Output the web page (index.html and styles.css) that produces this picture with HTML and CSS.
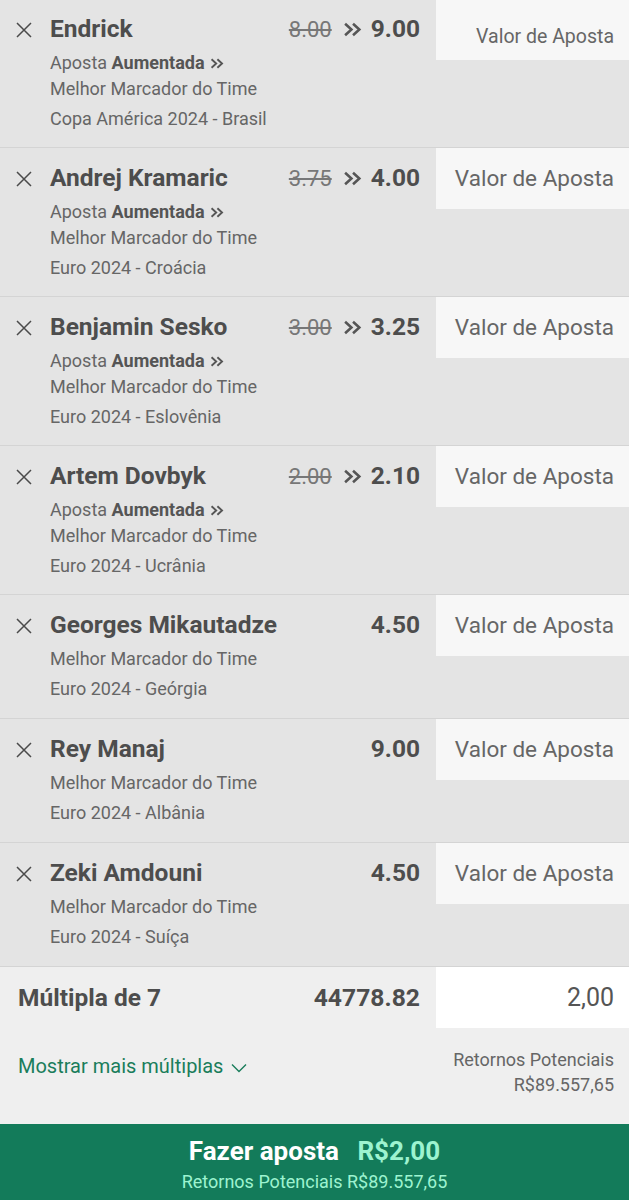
FILE: index.html
```html
<!DOCTYPE html>
<html lang="pt-BR">
<head>
    <meta charset="UTF-8">
    <meta name="viewport" content="width=device-width, initial-scale=1.0">
    <title>Boletim de Apostas</title>
    <link rel="stylesheet" href="styles.css">
</head>
<body>
    <div class="slip">
        <div class="bet">
            <div class="remove"><svg viewBox="0 0 16 16"><path d="M1 1L15 15M15 1L1 15"/></svg></div>
            <div class="info">
                <div class="name">Endrick</div>
                <div class="boost">Aposta <b>Aumentada</b> <svg class="chev" viewBox="0 0 18 14"><path d="M2 1.5L8 7L2 12.5M9.5 1.5L15.5 7L9.5 12.5"/></svg></div>
                <div class="line">Melhor Marcador do Time</div>
                <div class="line">Copa América 2024 - Brasil</div>
            </div>
            <div class="odds"><s>8.00</s><svg class="chev" viewBox="0 0 18 14"><path d="M2 1.5L8 7L2 12.5M9.5 1.5L15.5 7L9.5 12.5"/></svg><b>9.00</b></div>
            <div class="stake stake-small">Valor de Aposta</div>
        </div>

        <div class="bet">
            <div class="remove"><svg viewBox="0 0 16 16"><path d="M1 1L15 15M15 1L1 15"/></svg></div>
            <div class="info">
                <div class="name">Andrej Kramaric</div>
                <div class="boost">Aposta <b>Aumentada</b> <svg class="chev" viewBox="0 0 18 14"><path d="M2 1.5L8 7L2 12.5M9.5 1.5L15.5 7L9.5 12.5"/></svg></div>
                <div class="line">Melhor Marcador do Time</div>
                <div class="line">Euro 2024 - Croácia</div>
            </div>
            <div class="odds"><s>3.75</s><svg class="chev" viewBox="0 0 18 14"><path d="M2 1.5L8 7L2 12.5M9.5 1.5L15.5 7L9.5 12.5"/></svg><b>4.00</b></div>
            <div class="stake">Valor de Aposta</div>
        </div>

        <div class="bet">
            <div class="remove"><svg viewBox="0 0 16 16"><path d="M1 1L15 15M15 1L1 15"/></svg></div>
            <div class="info">
                <div class="name">Benjamin Sesko</div>
                <div class="boost">Aposta <b>Aumentada</b> <svg class="chev" viewBox="0 0 18 14"><path d="M2 1.5L8 7L2 12.5M9.5 1.5L15.5 7L9.5 12.5"/></svg></div>
                <div class="line">Melhor Marcador do Time</div>
                <div class="line">Euro 2024 - Eslovênia</div>
            </div>
            <div class="odds"><s>3.00</s><svg class="chev" viewBox="0 0 18 14"><path d="M2 1.5L8 7L2 12.5M9.5 1.5L15.5 7L9.5 12.5"/></svg><b>3.25</b></div>
            <div class="stake">Valor de Aposta</div>
        </div>

        <div class="bet">
            <div class="remove"><svg viewBox="0 0 16 16"><path d="M1 1L15 15M15 1L1 15"/></svg></div>
            <div class="info">
                <div class="name">Artem Dovbyk</div>
                <div class="boost">Aposta <b>Aumentada</b> <svg class="chev" viewBox="0 0 18 14"><path d="M2 1.5L8 7L2 12.5M9.5 1.5L15.5 7L9.5 12.5"/></svg></div>
                <div class="line">Melhor Marcador do Time</div>
                <div class="line">Euro 2024 - Ucrânia</div>
            </div>
            <div class="odds"><s>2.00</s><svg class="chev" viewBox="0 0 18 14"><path d="M2 1.5L8 7L2 12.5M9.5 1.5L15.5 7L9.5 12.5"/></svg><b>2.10</b></div>
            <div class="stake">Valor de Aposta</div>
        </div>

        <div class="bet">
            <div class="remove"><svg viewBox="0 0 16 16"><path d="M1 1L15 15M15 1L1 15"/></svg></div>
            <div class="info">
                <div class="name">Georges Mikautadze</div>
                <div class="line">Melhor Marcador do Time</div>
                <div class="line">Euro 2024 - Geórgia</div>
            </div>
            <div class="odds"><b>4.50</b></div>
            <div class="stake">Valor de Aposta</div>
        </div>

        <div class="bet">
            <div class="remove"><svg viewBox="0 0 16 16"><path d="M1 1L15 15M15 1L1 15"/></svg></div>
            <div class="info">
                <div class="name">Rey Manaj</div>
                <div class="line">Melhor Marcador do Time</div>
                <div class="line">Euro 2024 - Albânia</div>
            </div>
            <div class="odds"><b>9.00</b></div>
            <div class="stake">Valor de Aposta</div>
        </div>

        <div class="bet">
            <div class="remove"><svg viewBox="0 0 16 16"><path d="M1 1L15 15M15 1L1 15"/></svg></div>
            <div class="info">
                <div class="name">Zeki Amdouni</div>
                <div class="line">Melhor Marcador do Time</div>
                <div class="line">Euro 2024 - Suíça</div>
            </div>
            <div class="odds"><b>4.50</b></div>
            <div class="stake">Valor de Aposta</div>
        </div>
    </div>

    <div class="multiple">
        <div class="multiple-top">
            <div class="multiple-title">Múltipla de 7</div>
            <div class="multiple-odds">44778.82</div>
            <div class="multiple-stake">2,00</div>
        </div>
        <div class="multiple-bottom">
            <a class="more" href="#">Mostrar mais múltiplas <svg viewBox="0 0 16 10"><path d="M1 1.5L8 8.5L15 1.5"/></svg></a>
            <div class="returns">
                <div>Retornos Potenciais</div>
                <div>R$89.557,65</div>
            </div>
        </div>
    </div>

    <button class="place" type="button">
        <span class="place-main">Fazer aposta <span class="place-amount">R$2,00</span></span>
        <span class="place-sub">Retornos Potenciais R$89.557,65</span>
    </button>
</body>
</html>
```

FILE: styles.css
```css
body {
    margin: 0;
    font-family: Roboto, "Liberation Sans", sans-serif;
    background-color: #e4e4e4;
    color: #4a4a4a;
}
.slip {
    margin-top: -1px;
}
.bet {
    display: flex;
    box-sizing: border-box;
    min-height: 124px;
    background-color: #e4e4e4;
    border-bottom: 1px solid #d4d4d4;
    padding-bottom: 13px;
}
.remove {
    width: 50px;
    flex-shrink: 0;
    padding-top: 23px;
}
.remove svg {
    display: block;
    width: 16px;
    height: 16px;
    margin-left: 16px;
    fill: none;
    stroke: #4a4a4a;
    stroke-width: 1.5;
}
.info {
    flex: 1;
    padding-top: 14px;
}
.name {
    font-size: 24.5px;
    font-weight: 700;
    line-height: 32px;
    color: #4d4d4d;
    margin-bottom: 3px;
}
.boost, .line {
    font-size: 18px;
    line-height: 30px;
    color: #666;
}
.boost {
    height: 26px;
}
.boost b {
    font-weight: 700;
    color: #555;
}
.chev {
    fill: none;
    stroke: #555;
    stroke-width: 2.4;
}
.boost .chev {
    width: 14px;
    height: 11px;
    margin-left: 1px;
}
.odds {
    padding-top: 14px;
    line-height: 32px;
    margin-right: 16px;
    white-space: nowrap;
}
.odds s {
    font-size: 22px;
    color: #777;
}
.odds .chev {
    width: 19px;
    height: 15px;
    margin: 0 9px 0 11px;
}
.odds b {
    font-size: 24.5px;
    font-weight: 700;
    color: #4d4d4d;
}
.stake {
    width: 178px;
    height: 61px;
    padding-right: 15px;
    flex-shrink: 0;
    background-color: #f7f7f7;
    text-align: right;
    font-size: 22.5px;
    line-height: 61px;
    color: #666;
}
.stake-small {
    font-size: 19.5px;
    line-height: 76px;
}
.multiple {
    background-color: #efefef;
    height: 157px;
}
.multiple-top {
    display: flex;
    align-items: center;
}
.multiple-title {
    flex: 1;
    padding-left: 18px;
    font-size: 24.5px;
    font-weight: 700;
    color: #4d4d4d;
}
.multiple-odds {
    margin-right: 16px;
    font-size: 24.7px;
    font-weight: 700;
    color: #4d4d4d;
}
.multiple-stake {
    width: 178px;
    height: 61px;
    padding-right: 15px;
    background-color: #fff;
    text-align: right;
    font-size: 25px;
    line-height: 61px;
    color: #555;
}
.multiple-bottom {
    display: flex;
    justify-content: space-between;
    padding: 19px 15px 0 18px;
}
.more {
    margin-top: 7px;
    line-height: 24px;
    color: #1a7d5b;
    text-decoration: none;
    font-size: 20px;
}
.more svg {
    width: 16px;
    height: 10px;
    margin-left: 3px;
    fill: none;
    stroke: #1a7d5b;
    stroke-width: 1.4;
}
.returns {
    text-align: right;
    font-size: 18px;
    line-height: 25px;
    color: #666;
}
.place {
    display: flex;
    flex-direction: column;
    align-items: center;
    width: 100%;
    height: 76px;
    border: none;
    padding: 10px 0 0;
    background-color: #137b5a;
    font-family: inherit;
}
.place-main {
    font-size: 26px;
    font-weight: 700;
    line-height: 34px;
    color: #fff;
}
.place-amount {
    margin-left: 12px;
    color: #9df3d0;
}
.place-sub {
    margin-top: 2px;
    font-size: 18px;
    line-height: 24px;
    color: #9df3d0;
}
```
